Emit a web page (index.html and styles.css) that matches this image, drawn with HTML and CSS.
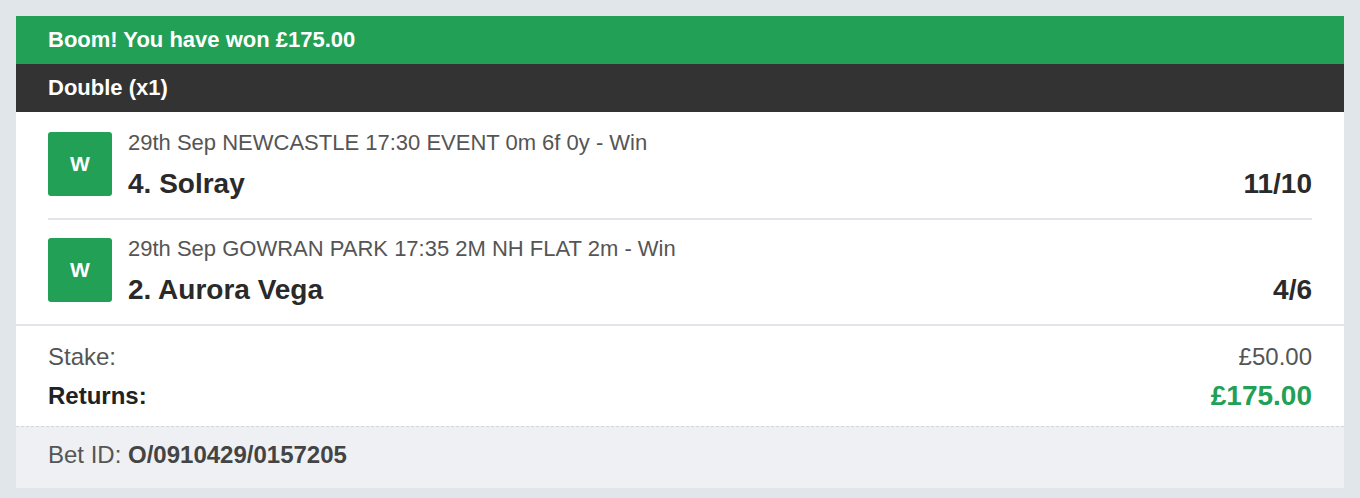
FILE: index.html
```html
<!DOCTYPE html>
<html lang="en">
<head>
<meta charset="utf-8">
<title>Bet receipt</title>
<link rel="stylesheet" href="styles.css">
</head>
<body>
<div class="card">
  <div class="banner">Boom! You have won £175.00</div>
  <div class="bet-type">Double (x1)</div>
  <div class="selections">
    <div class="sel">
      <div class="badge">W</div>
      <div class="info">
        <div class="event">29th Sep NEWCASTLE 17:30 EVENT 0m 6f 0y - Win</div>
        <div class="runner"><span class="name">4. Solray</span><span class="odds">11/10</span></div>
      </div>
    </div>
    <div class="sel">
      <div class="badge">W</div>
      <div class="info">
        <div class="event">29th Sep GOWRAN PARK 17:35 2M NH FLAT 2m - Win</div>
        <div class="runner"><span class="name">2. Aurora Vega</span><span class="odds">4/6</span></div>
      </div>
    </div>
  </div>
  <div class="totals">
    <div class="line stake"><span>Stake:</span><span>£50.00</span></div>
    <div class="line returns"><span>Returns:</span><span class="amount">£175.00</span></div>
  </div>
  <div class="footer">Bet ID: <b>O/0910429/0157205</b></div>
</div>
</body>
</html>
```
FILE: styles.css
```css
* { box-sizing: border-box; }
html, body { margin: 0; }
body {
  background: #e1e6ea;
  padding: 16px;
  font-family: "Liberation Sans", Arial, sans-serif;
  color: #333;
}
.card { background: #fff; }
.banner, .bet-type {
  height: 48px;
  line-height: 48px;
  padding: 0 32px;
  font-size: 22px;
  font-weight: bold;
  color: #fff;
}
.banner { background: #22a056; }
.bet-type { background: #333333; }
.selections {
  padding: 0 32px;
  border-bottom: 2px solid #e1e5e9;
}
.sel {
  display: flex;
  align-items: flex-start;
  gap: 16px;
  padding: 20px 0 22px;
}
.sel + .sel {
  border-top: 2px solid #e1e5e9;
  padding-top: 18px;
}
.badge {
  width: 64px;
  height: 64px;
  flex: none;
  background: #22a056;
  border-radius: 3px;
  color: #fff;
  font-weight: bold;
  font-size: 21px;
  display: flex;
  align-items: center;
  justify-content: center;
}
.info {
  flex: 1;
  margin-bottom: -2px;
}
.event {
  font-size: 22px;
  line-height: 22px;
  color: #555;
}
.runner {
  display: flex;
  justify-content: space-between;
  align-items: baseline;
  margin-top: 16px;
  font-size: 28px;
  line-height: 28px;
  font-weight: bold;
  color: #2a2a2a;
}
.totals { padding: 16px 32px 13px; }
.line {
  display: flex;
  justify-content: space-between;
  align-items: center;
  font-size: 24px;
  line-height: 30px;
}
.stake { color: #555; }
.returns {
  margin-top: 7px;
  height: 34px;
  font-weight: bold;
  color: #222;
}
.amount {
  color: #22a056;
  font-size: 28px;
  line-height: 34px;
}
.footer {
  background: #eef0f4;
  border-top: 1px dashed #d3d5d8;
  padding: 13px 32px 18px;
  font-size: 24px;
  line-height: 30px;
  color: #555;
}
.footer b { color: #444; }
```
